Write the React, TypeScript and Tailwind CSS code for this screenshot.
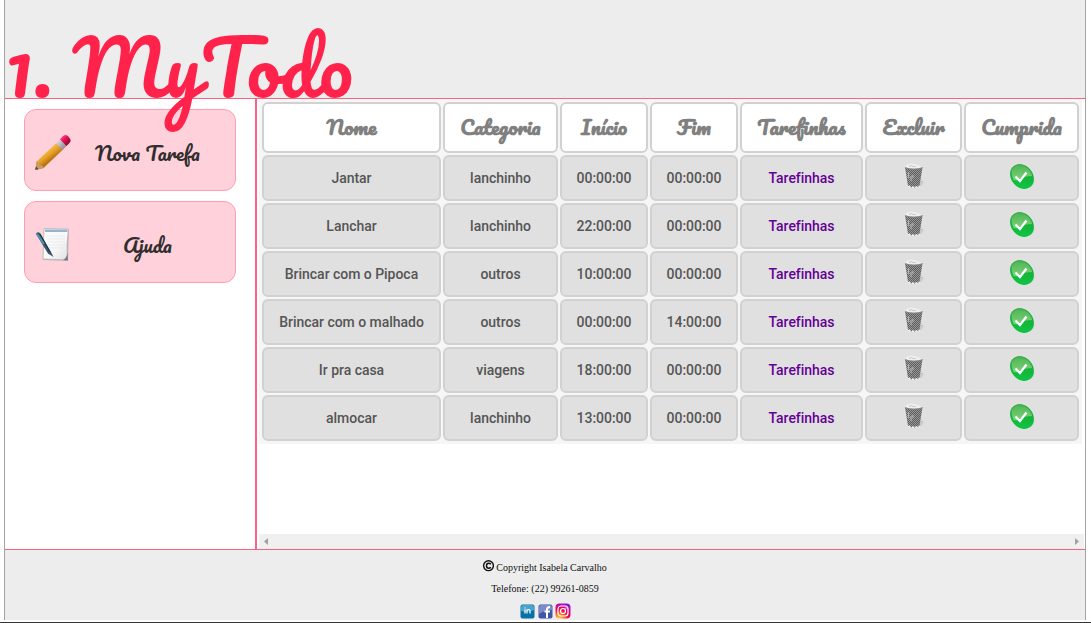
import type { ReactNode } from "react";

const columns = ["Nome", "Categoria", "Início", "Fim", "Tarefinhas", "Excluir", "Cumprida"];

const tasks = [
  ["Jantar", "lanchinho", "00:00:00", "00:00:00"],
  ["Lanchar", "lanchinho", "22:00:00", "00:00:00"],
  ["Brincar com o Pipoca", "outros", "10:00:00", "00:00:00"],
  ["Brincar com o malhado", "outros", "00:00:00", "14:00:00"],
  ["Ir pra casa", "viagens", "18:00:00", "00:00:00"],
  ["almocar", "lanchinho", "13:00:00", "00:00:00"],
];

const script = "font-['Pacifico',cursive]";

function Pencil() {
  return (
    <svg width="36" height="36" viewBox="0 0 36 36">
      <defs>
        <linearGradient id="wood" x1="11" y1="15" x2="18" y2="24" gradientUnits="userSpaceOnUse">
          <stop offset="0" stopColor="#f6c04c" />
          <stop offset=".5" stopColor="#e9a32b" />
          <stop offset="1" stopColor="#b9720c" />
        </linearGradient>
        <linearGradient id="metal" x1="22" y1="6" x2="29" y2="14" gradientUnits="userSpaceOnUse">
          <stop offset="0" stopColor="#e3dfe5" />
          <stop offset="1" stopColor="#8d8995" />
        </linearGradient>
        <linearGradient id="rubber" x1="26" y1="1" x2="34" y2="9" gradientUnits="userSpaceOnUse">
          <stop offset="0" stopColor="#ff4d82" />
          <stop offset=".55" stopColor="#df0e50" />
          <stop offset="1" stopColor="#8d0638" />
        </linearGradient>
      </defs>
      <g transform="translate(0 .6)">
        <path d="M1.500 27 21.500 8.500 28 15 8.500 33.500 0.300 35.500Z" fill="url(#wood)" />
        <path d="M1.500 27Q5 28 5 30.500Q8 30.500 8.500 33.500L0.300 35.500Z" fill="#c99a68" />
        <path d="M1 32 3.500 34.500 0.300 35.400Z" fill="#544747" />
        <path d="M21 9 25.500 4.500 32 11 27.500 15.500Z" fill="url(#metal)" />
        <path d="M25 5 27.500 2Q30 -1 33 1.500L34.500 3.500Q37 6 34 9L31.500 11.500Z" fill="url(#rubber)" />
      </g>
    </svg>
  );
}

function Notepad() {
  return (
    <svg width="36" height="36" viewBox="0 0 36 36">
      <defs>
        <linearGradient id="sheet" x1="0" y1="0" x2="1" y2="1">
          <stop offset="0" stopColor="#fff" />
          <stop offset=".6" stopColor="#f6f6f6" />
          <stop offset="1" stopColor="#dcdee0" />
        </linearGradient>
      </defs>
      <path d="M10 3 34 4 33 35 8 34Z" fill="#9c969d" opacity=".5" />
      <path d="M9 2.500 33.500 3Q31 18 32.500 34L8 33Z" fill="url(#sheet)" stroke="#a9acb2" strokeWidth=".7" />
      <path d="M10 3.500H32.500V6H10Z" fill="#96b5c8" />
      <path d="M12 10H30M12 13H30M12 16H30M12 19H30M13 22H29" stroke="#e3e6e9" strokeWidth=".7" />
      <path d="M28 34Q32 32 32.500 26L33 34.500Z" fill="#777b80" />
      <path d="M1 8Q2 5 5 7L16 26 18.500 31 13 27.500Z" fill="#355568" />
      <path d="M2 8 9 18" stroke="#4f93b2" strokeWidth="2" />
      <path d="M5 8 15 26" stroke="#1e2e3a" strokeWidth="1" />
    </svg>
  );
}

function Trash() {
  return (
    <svg width="20" height="26" viewBox="0 0 20 26">
      <defs>
        <pattern id="mesh" width="2" height="2" patternUnits="userSpaceOnUse">
          <path d="M0 0H2V2H0Z" fill="#969696" />
          <path d="M0 0H1V1H0ZM1 1H2V2H1Z" fill="#5e5e5e" />
        </pattern>
      </defs>
      <path d="M14 22 17 17 20 19 17 23H12Z" fill="#c9c9c9" />
      <path d="M1 4 18.500 4.500 15.500 23Q9.500 26 4 23Z" fill="url(#mesh)" />
      <path d="M4.500 9V15M7 13V18M9 12V15" stroke="#b5b5b5" strokeWidth="1.200" fill="none" />
      <path d="M1 4.500Q2 1 5 1.500Q7 0 9 1Q12 .5 13 2Q17 2.500 18.500 4.500Q10 7 1 4.500Z" fill="#efefef" />
      <path d="M1 4.500Q10 8 18.500 4.500" fill="none" stroke="#878787" strokeWidth=".8" />
      <path d="M5 3.500 7 2.500 9 3.500 12 3.500" stroke="#c7c7c7" fill="none" />
      <path d="M4.500 23Q10 25.500 15.500 23" fill="none" stroke="#f7f7f7" strokeWidth="1.600" strokeDasharray="2 1.500" />
    </svg>
  );
}

function Check() {
  return (
    <svg width="24" height="25" viewBox="0 0 24 25">
      <defs>
        <linearGradient id="disc" x1="0" y1="0" x2="24" y2="25" gradientUnits="userSpaceOnUse">
          <stop offset="0" stopColor="#48ae50" />
          <stop offset=".5" stopColor="#15b43a" />
          <stop offset="1" stopColor="#06ce43" />
        </linearGradient>
        <linearGradient id="gloss" x1="0" y1="0" x2="0" y2="1">
          <stop offset="0" stopColor="#56b65a" />
          <stop offset="1" stopColor="#91d686" />
        </linearGradient>
      </defs>
      <g transform="rotate(50 12 12.500)">
        <ellipse cx="12" cy="12.500" rx="13.400" ry="10.800" fill="url(#disc)" />
      </g>
      <path d="M1.500 8Q2 2.500 8 1.500Q15 1 19.500 6.500Q22 10 22 12Q14 12 9 15Q5 17 3.500 16Q1.500 12 1.500 8Z" fill="url(#gloss)" opacity=".85" />
      <path d="M5.500 12.500 10 17 16.500 8.500" fill="none" stroke="#fff" strokeWidth="2.300" />
    </svg>
  );
}

function LinkedIn() {
  return (
    <svg width="15" height="15" viewBox="0 0 15 15">
      <rect x=".5" y=".5" width="14" height="14" rx="2" fill="#0871a5" />
      <path d="M1 3Q1 1 3 1H12Q14 1 14 3V6Q8 9 1 7Z" fill="#4ba3c9" />
      <path d="M5 5.500V9.500M7 9.500V5.500M7 7Q7 5.500 8.500 5.500Q10 5.500 10 7V9.500M5 3.500V4.500" fill="none" stroke="#fff" strokeWidth="1.200" />
    </svg>
  );
}

function Facebook() {
  return (
    <svg width="15" height="15" viewBox="0 0 15 15">
      <rect x=".5" y=".5" width="14" height="14" rx="2" fill="#4057a5" />
      <path d="M1 3Q1 1 3 1H12Q14 1 14 3V6Q7 6 1 10Z" fill="#7b8bc8" />
      <path d="M9 14V5.500Q9 3 12 3M6.500 7.500H12" fill="none" stroke="#fff" strokeWidth="2" />
    </svg>
  );
}

function Instagram() {
  return (
    <svg width="16" height="16" viewBox="0 0 16 16">
      <defs>
        <radialGradient id="insta" cx=".25" cy="1" r="1.100">
          <stop offset="0" stopColor="#ffd34f" />
          <stop offset=".28" stopColor="#ff7a26" />
          <stop offset=".55" stopColor="#f00946" />
          <stop offset=".8" stopColor="#d000a4" />
          <stop offset="1" stopColor="#7a16df" />
        </radialGradient>
      </defs>
      <rect x=".5" y=".5" width="15" height="15" rx="4" fill="url(#insta)" />
      <rect x="3" y="3" width="10" height="10" rx="3" fill="none" stroke="#fff" strokeWidth="1.200" />
      <circle cx="8" cy="8" r="2.500" fill="none" stroke="#fff" strokeWidth="1.200" />
      <circle cx="11" cy="5" r=".7" fill="#fff" />
    </svg>
  );
}

function MenuButton({ icon, children }: { icon: ReactNode; children: ReactNode }) {
  return (
    <button className="flex h-[82px] w-[212px] items-center rounded-[12px] border border-[#ff9db1] bg-[#ffd2db] pl-[10px] pt-[4px]">
      <span className="h-9 w-9 shrink-0">{icon}</span>
      <span className={`${script} flex-1 whitespace-nowrap pr-[11px] pt-[2px] text-center text-[20px] font-normal text-[#322d2f]`}>{children}</span>
    </button>
  );
}

function Cell({ children }: { children: ReactNode }) {
  return (
    <div className="flex h-[46px] items-center justify-center rounded-[6px] border-2 border-[#d1d1d1] bg-[#e0e0e0]">
      {children}
    </div>
  );
}

export default function App() {
  return (
    <div className="flex h-[623px] w-[1091px] flex-col overflow-hidden bg-white font-['Roboto',sans-serif]">
      <div className="ml-1 flex h-[620px] w-[1082px] flex-col border-x border-[#a3a3a3]">
        <header className="h-[99px] shrink-0 border-b border-[#f56580] bg-[#ededed]">
          <h1 className={`${script} relative z-10 w-max whitespace-nowrap pt-[14px] text-[75px] font-normal leading-[104px] text-[#ff224b]`}>
            1. MyTodo
          </h1>
        </header>
        <div className="flex h-[450px] shrink-0">
          <nav className="flex w-[252px] shrink-0 flex-col gap-[10px] border-r-2 border-[#ff6380] pl-[19px] pt-[10px]">
            <MenuButton icon={<Pencil />}>Nova Tarefa</MenuButton>
            <MenuButton icon={<Notepad />}>Ajuda</MenuButton>
          </nav>
          <main className="flex min-w-0 flex-1 flex-col justify-between pl-[2px]">
            <div className="grid w-[823px] grid-cols-[179px_115px_88px_88px_123px_97px_115px] gap-[2px] bg-[#f6f6f6] pb-[3px] pl-[3px] pt-[3px] text-[14px] font-medium tracking-[-0.03px] text-[#555]">
              {columns.map((name) => (
                <div key={name} className={`${script} flex h-[51px] items-center justify-center rounded-[6px] border-2 border-[#d1d1d1] bg-white pb-[2px] text-[20px] font-bold tracking-normal text-[#808080]`}>
                  {name}
                </div>
              ))}
              {tasks.map((task) => [
                ...task.map((value, i) => <Cell key={task[0] + i}>{value}</Cell>),
                <Cell key={task[0] + "link"}><a className="text-[#650096]">Tarefinhas</a></Cell>,
                <Cell key={task[0] + "trash"}><span className="pb-[4px]"><Trash /></span></Cell>,
                <Cell key={task[0] + "check"}><span className="pb-[3px]"><Check /></span></Cell>,
              ])}
            </div>
            <div className="flex h-[15px] w-[825px] items-center justify-between bg-[#f0f0f0] px-[5px]">
              <svg width="4" height="7"><path d="M4 0V7L0 3.500Z" fill="#a1a1a1" /></svg>
              <svg width="4" height="7"><path d="M0 0V7L4 3.500Z" fill="#a1a1a1" /></svg>
            </div>
          </main>
        </div>
        <footer className="flex flex-1 flex-col items-center border-t border-[#f56580] bg-[#ededed] font-['Liberation_Serif',serif] text-[10px] text-[#111]">
          <p className="flex h-[31px] items-center gap-[2px] pr-px">
            <svg width="12" height="12" viewBox="0 0 12 12">
              <circle cx="6.500" cy="5.700" r="4.900" fill="none" stroke="#111" strokeWidth="1.400" />
              <path d="M8.800 4.300Q8 3.200 6.700 3.200Q4.500 3.200 4.500 5.700Q4.500 8.200 6.700 8.200Q8 8.200 8.800 7.200" fill="none" stroke="#111" strokeWidth="1.500" />
            </svg>
            <span className="pt-[3px]">Copyright Isabela Carvalho</span>
          </p>
          <p className="mt-[2px] h-[20px] leading-[12px]">Telefone: (22) 99261-0859</p>
          <div className="flex h-[16px] items-center"><LinkedIn /><span className="w-[3px]" /><Facebook /><span className="w-[2px]" /><Instagram /></div>
        </footer>
      </div>
      <div className="mt-[2px] h-px bg-[#383532]" />
    </div>
  );
}
